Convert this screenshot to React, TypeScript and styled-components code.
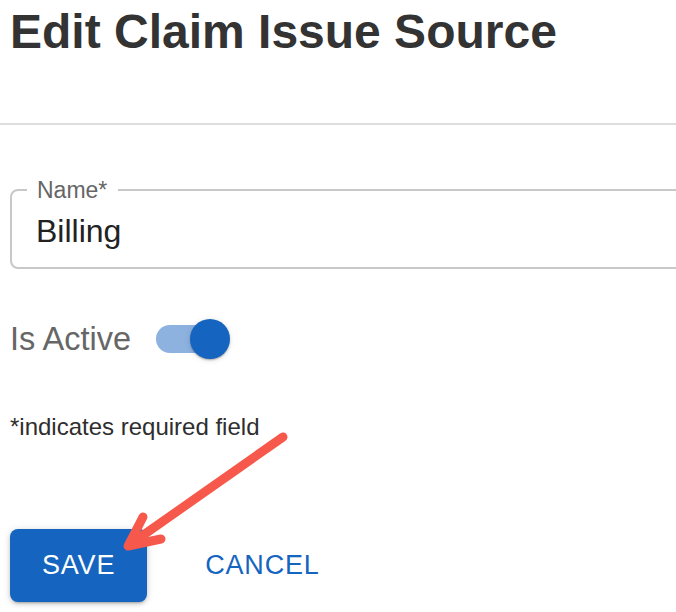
import React, { useState } from 'react';
import styled, { createGlobalStyle } from 'styled-components';

const GlobalStyle = createGlobalStyle`
  html, body {
    margin: 0;
    padding: 0;
    background: #ffffff;
  }
  body {
    font-family: "Liberation Sans", Arial, Helvetica, sans-serif;
    overflow: hidden;
  }
`;

const Page = styled.div`
  position: relative;
  width: 676px;
  height: 612px;
  overflow: hidden;
  background: #fff;
`;

const Title = styled.h1`
  margin: 0;
  padding: 4px 0 0 10px;
  font-size: 48px;
  line-height: 56px;
  font-weight: 700;
  color: #333333;
  white-space: nowrap;
`;

const Divider = styled.hr`
  margin: 63px 0 0;
  border: none;
  height: 2px;
  background: #dddddd;
`;

const Form = styled.form`
  padding-left: 10px;
  display: flex;
  flex-direction: column;
`;

const Field = styled.fieldset`
  margin: 52px 0 0;
  padding: 0;
  width: 720px;
  border: 2px solid #c8c8c8;
  border-radius: 8px;
  box-sizing: border-box;
`;

const FieldLabel = styled.legend`
  margin-left: 15px;
  padding: 0 11px 0 10px;
  font-size: 23px;
  line-height: 26px;
  color: #666666;
`;

const FieldInput = styled.input`
  display: block;
  height: 56px;
  margin: 0 0 8px;
  padding: 0 0 0 24px;
  border: none;
  outline: none;
  background: transparent;
  font-family: inherit;
  font-size: 32px;
  color: #222222;
`;

const SwitchRow = styled.label`
  margin-top: 50px;
  display: flex;
  align-items: center;
  height: 40px;
  gap: 25px;
  cursor: pointer;
`;

const SwitchText = styled.span`
  font-size: 32.5px;
  color: #666666;
`;

const Track = styled.span<{ $on: boolean }>`
  position: relative;
  display: inline-block;
  width: 68px;
  height: 28px;
  border-radius: 14px;
  background: ${(p) => (p.$on ? '#8db2e0' : '#b9b9b9')};
`;

const Thumb = styled.span<{ $on: boolean }>`
  position: absolute;
  top: -6px;
  left: ${(p) => (p.$on ? '34px' : '-6px')};
  width: 40px;
  height: 40px;
  border-radius: 50%;
  background: ${(p) => (p.$on ? '#1565c0' : '#fafafa')};
  box-shadow: 0 2px 2px -1px rgba(0, 0, 0, 0.2), 0 1px 2px 0 rgba(0, 0, 0, 0.14),
    0 1px 6px 0 rgba(0, 0, 0, 0.12);
`;

const Hint = styled.p`
  margin: 54px 0 0;
  font-size: 24px;
  line-height: 28px;
  color: #2e2e2e;
`;

const Actions = styled.div`
  margin-top: 88px;
  display: flex;
  align-items: center;
  gap: 26px;
`;

const Button = styled.button<{ $primary?: boolean }>`
  height: 73px;
  padding: 0 32px;
  border: none;
  border-radius: 8px;
  font-family: inherit;
  font-size: 27px;
  letter-spacing: 0.8px;
  text-transform: uppercase;
  cursor: pointer;
  color: ${(p) => (p.$primary ? '#ffffff' : '#1565c0')};
  background: ${(p) => (p.$primary ? '#1565c0' : 'transparent')};
  box-shadow: ${(p) =>
    p.$primary
      ? '0 3px 2px -2px rgba(0,0,0,0.2), 0 2px 4px 0 rgba(0,0,0,0.14), 0 1px 8px 0 rgba(0,0,0,0.12)'
      : 'none'};
`;

const Arrow = styled.svg`
  position: absolute;
  left: 0;
  top: 0;
  pointer-events: none;
`;

const App = () => {
  const [name, setName] = useState('Billing');
  const [active, setActive] = useState(true);

  return (
    <Page>
      <GlobalStyle />
      <Title>Edit Claim Issue Source</Title>
      <Divider />

      <Form onSubmit={(e) => e.preventDefault()}>
        <Field>
          <FieldLabel>Name*</FieldLabel>
          <FieldInput value={name} onChange={(e) => setName(e.target.value)} />
        </Field>

        <SwitchRow onClick={() => setActive(!active)}>
          <SwitchText>Is Active</SwitchText>
          <Track $on={active}>
            <Thumb $on={active} />
          </Track>
        </SwitchRow>

        <Hint>*indicates required field</Hint>

        <Actions>
          <Button $primary type="submit">Save</Button>
          <Button type="button">Cancel</Button>
        </Actions>
      </Form>

      {/* annotation arrow pointing at save */}
      <Arrow width="676" height="612" viewBox="0 0 676 612">
        <g stroke="#f6594b" strokeWidth="9" strokeLinecap="round" strokeLinejoin="round" fill="none">
          <path d="M283 437 L132 543" />
          <path d="M143 517 L128 546 L161 539" />
        </g>
      </Arrow>
    </Page>
  );
};

export default App;
